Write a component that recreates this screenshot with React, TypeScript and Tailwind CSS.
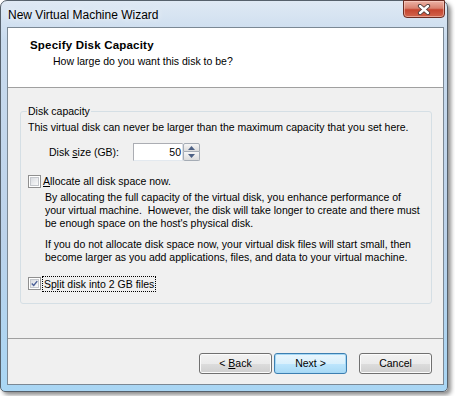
import React from 'react';

// Vista style check box
function CheckBox({ checked }: { checked?: boolean }) {
  return (
    <div className="w-[13px] h-[13px] border border-[#8f8f8f] bg-white p-[1px] shrink-0">
      <div className="w-full h-full border border-[#c4c7cc] bg-gradient-to-br from-[#d9dce1] to-[#fafafa] flex items-center justify-center">
        {checked && (
          <svg width="9" height="9" viewBox="0 0 9 9">
            <path d="M1 4.5 L3.5 7 L8 1.5" fill="none" stroke="#4a5f97" strokeWidth="1.8" />
          </svg>
        )}
      </div>
    </div>
  );
}

function WizButton({ children, isDefault }: { children: React.ReactNode; isDefault?: boolean }) {
  return (
    <button
      className={`w-[73px] h-[21px] rounded-[3px] border text-[10.5px] leading-[13px] flex items-center justify-center
        ${isDefault
          ? 'border-[#3c7fb1] bg-[linear-gradient(to_bottom,#eaf6fd_0%,#d9f0fc_50%,#bee6fd_51%,#a7d9f5_100%)] shadow-[inset_0_0_0_1px_#a6d8f5]'
          : 'border-[#707070] bg-[linear-gradient(to_bottom,#f2f2f2_0%,#ebebeb_50%,#dddddd_51%,#cfcfcf_100%)] shadow-[inset_0_0_0_1px_#fbfbfb]'}`}
    >
      <span className="whitespace-pre">{children}</span>
    </button>
  );
}

function CloseButton() {
  return (
    <div className="w-[42px] h-[18px] -mt-[1px] mr-[2px] rounded-b-[4px] border border-[#6b2c22] bg-[linear-gradient(to_bottom,#ecb3a6_0%,#d98270_45%,#c5452f_55%,#d2644c_100%)] shadow-[inset_0_0_0_1px_rgba(255,220,210,0.5)] flex items-center justify-center">
      <svg width="14" height="11" viewBox="0 0 14 11">
        <path d="M3 2 L11 9 M11 2 L3 9" stroke="#4a3a38" strokeWidth="4.2" strokeLinecap="round" />
        <path d="M3 2 L11 9 M11 2 L3 9" stroke="#ffffff" strokeWidth="2.4" strokeLinecap="round" />
      </svg>
    </div>
  );
}

export default function App() {
  return (
    <div className="w-[455px] h-[396px] bg-white font-['Liberation_Sans',Arial,sans-serif] text-[10.5px] leading-[13px] text-black">
      <div className="w-[448px] h-[392px] rounded-t-[7px] rounded-b-[5px] border border-[#56616c] bg-[linear-gradient(to_bottom,#dfe9f4_0%,#c9dbee_10%,#bcd2ea_60%,#a9d6f4_100%)] shadow-[3px_3px_4px_rgba(0,0,0,0.45)] flex flex-col">
        {/* Title bar */}
        <div className="h-[26px] flex items-start justify-between">
          <span className="text-[12px] leading-[14px] ml-[7px] mt-[7px] [text-shadow:0_0_6px_#ffffff]">New Virtual Machine Wizard</span>
          <CloseButton />
        </div>

        {/* Client area */}
        <div className="ml-[6px] mr-[3px] h-[358px] border border-[#7b8894] flex flex-col bg-[#f0f0f0]">
          {/* Header */}
          <div className="h-[60px] bg-white border-b border-[#a0a0a0] pl-[22px] pt-[11px]">
            <div className="font-bold text-[11.5px] tracking-[0.2px]">Specify Disk Capacity</div>
            <div className="ml-[23px] mt-[3px]">How large do you want this disk to be?</div>
          </div>

          {/* Body */}
          <div className="flex-1 flex flex-col">
            <fieldset className="mt-[17px] ml-[12px] w-[412px] border border-[#d5dfe5] rounded-[3px] pl-[7px] pb-[13px]">
              <legend className="-ml-[1px] px-[1px]">Disk capacity</legend>
              <div className="mt-[3px] whitespace-nowrap">This virtual disk can never be larger than the maximum capacity that you set here.</div>

              <div className="mt-[9px] flex items-center">
                <span className="ml-[21px] w-[84px]">Disk <span className="underline">s</span>ize (GB):</span>
                <div className="w-[50px] h-[18px] border border-[#abadb3] border-r-[#dbdfe6] border-b-[#e3e9ef] bg-white text-right pr-[1px] flex items-center justify-end">50</div>
                <div className="w-[17px] h-[18px] flex flex-col">
                  <div className="h-[9px] border border-[#a5acb5] rounded-t-[2px] bg-gradient-to-b from-[#f6f6f6] to-[#dcdcdc] flex items-center justify-center">
                    <svg width="7" height="4" viewBox="0 0 7 4"><path d="M0 4 L3.5 0 L7 4 Z" fill="#4d6185" /></svg>
                  </div>
                  <div className="h-[9px] border border-t-0 border-[#a5acb5] rounded-b-[2px] bg-gradient-to-b from-[#f6f6f6] to-[#dcdcdc] flex items-center justify-center">
                    <svg width="7" height="4" viewBox="0 0 7 4"><path d="M0 0 L3.5 4 L7 0 Z" fill="#4d6185" /></svg>
                  </div>
                </div>
              </div>

              <div className="mt-[14px] flex items-center h-[13px]">
                <CheckBox />
                <span className="ml-[2px]"><span className="underline">A</span>llocate all disk space now.</span>
              </div>

              <div className="ml-[17px] mt-[3px] whitespace-pre">
                {'By allocating the full capacity of the virtual disk, you enhance performance of\nyour virtual machine.  However, the disk will take longer to create and there must\nbe enough space on the host\'s physical disk.'}
              </div>
              <div className="ml-[17px] mt-[8px] whitespace-pre">
                {'If you do not allocate disk space now, your virtual disk files will start small, then\nbecome larger as you add applications, files, and data to your virtual machine.'}
              </div>

              <div className="mt-[13px] flex items-center h-[13px]">
                <CheckBox checked />
                <span className="ml-[1px] px-[1px] border border-dotted border-black leading-[14px]">Sp<span className="underline">l</span>it disk into 2 GB files</span>
              </div>
            </fieldset>

            <div className="mt-auto border-t border-[#a0a0a0]" />
            <div className="h-[45px] flex items-start justify-end pt-[14px] pr-[11px]">
              <WizButton>{'< '}<span className="underline">B</span>ack</WizButton>
              <div className="w-[2px]" />
              <WizButton isDefault>Next &gt;</WizButton>
              <div className="w-[12px]" />
              <WizButton>Cancel</WizButton>
            </div>
          </div>
        </div>
        <div className="h-[6px]" />
      </div>
    </div>
  );
}
